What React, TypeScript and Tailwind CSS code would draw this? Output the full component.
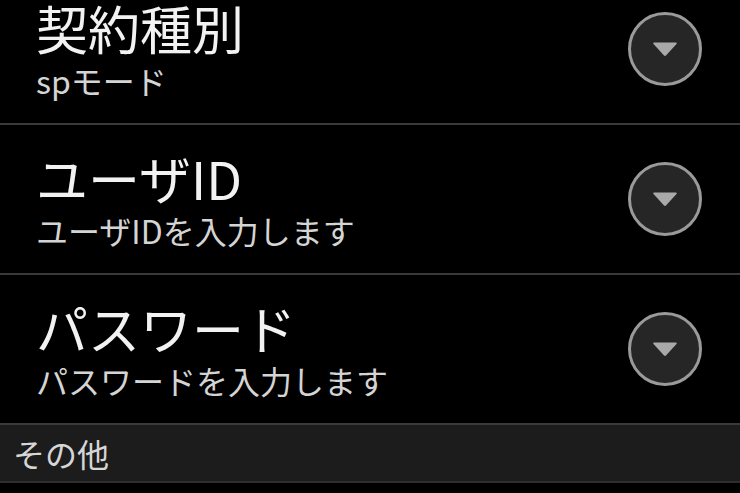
const font = { fontFamily: '"Noto Sans CJK JP", "Noto Sans", sans-serif' };

interface SettingRow {
  title: string;
  summary: string;
}

const rows: SettingRow[] = [
  { title: '契約種別', summary: 'spモード' },
  { title: 'ユーザID', summary: 'ユーザIDを入力します' },
  { title: 'パスワード', summary: 'パスワードを入力します' },
];

const DropButton = () => (
  <div className="flex h-[74px] w-[74px] shrink-0 items-center justify-center rounded-full border-[3px] border-[#9a9a9a] bg-[#262626]">
    <svg width="26" height="16" viewBox="0 0 26 16">
      <path d="M2 1.5 H24 Q25.5 1.5 24.5 3 L14.2 14.3 Q13 15.5 11.8 14.3 L1.5 3 Q0.5 1.5 2 1.5 Z" fill="#a9a9a9" />
    </svg>
  </div>
);

export default function App() {
  return (
    <div className="h-[493px] w-[740px] overflow-hidden bg-black" style={font}>
      <div className="-mt-[25px]">
        {rows.map((row) => (
          <div key={row.title}>
            <div className="flex h-[148px] items-center justify-between pl-[36px] pr-[38px]">
              <div className="flex flex-col">
                <span className="text-[52px] leading-[62px] text-[#f2f2f2]">{row.title}</span>
                <span className="text-[32px] leading-[42px] text-[#d4d4d4]">{row.summary}</span>
              </div>
              <DropButton />
            </div>
            <div className="h-[2px] bg-[#3a3a3a]" />
          </div>
        ))}
      </div>
      <div className="flex h-[58px] items-center border-b-2 border-[#2e2e2e] bg-[#1c1c1c] pl-[13px]">
        <span className="text-[32px] leading-[40px] text-[#d6d6d6]">その他</span>
      </div>
    </div>
  );
}
